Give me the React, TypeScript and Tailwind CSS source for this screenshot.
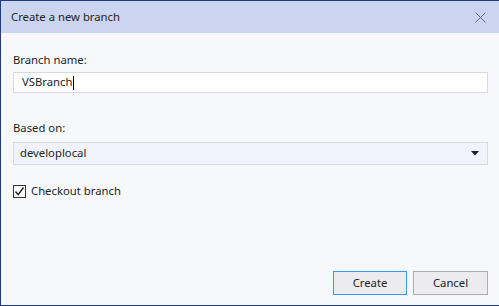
export default function App() {
  return (
    <div className="w-[499px] h-[306px] bg-[#f7f8fc] border border-r-0 border-[#1e3d7e] flex flex-col text-[11.3px] text-[#1e1e1e] font-['Noto_Sans','Open_Sans',sans-serif]">
      <div className="h-[32px] bg-[#ccd5f0] flex items-center justify-between pl-[10px] pr-[13px] shrink-0">
        <span>Create a new branch</span>
        <svg width="11" height="11" viewBox="0 0 11 11" className="text-[#5a6790]">
          <path d="M0.5 0.5 L10.5 10.5 M10.5 0.5 L0.5 10.5" stroke="currentColor" strokeWidth="1" />
        </svg>
      </div>

      <div className="flex-1 flex flex-col pl-[12px] pr-[11px] pt-[18px] pb-[10px]">
        <label className="leading-[18px]">Branch name:</label>
        <div className="mt-[3px] h-[21px] bg-white border border-[#d9d9de] flex items-center pl-[8px]">
          <span>VSBranch</span>
          <span className="w-px h-[14px] bg-black" />
        </div>

        <label className="mt-[26px] leading-[18px]">Based on:</label>
        <div className="mt-[5px] h-[23px] bg-[#f0f3fb] border border-[#d9d9de] flex items-center justify-between pl-[6px] pr-[8px]">
          <span>developlocal</span>
          <svg width="8" height="5" viewBox="0 0 8 5">
            <path d="M0 0 H8 L4 4.5 Z" fill="#1e1e1e" />
          </svg>
        </div>

        <div className="mt-[18px] flex items-center gap-[5px]">
          <span className="w-[13px] h-[13px] border border-[#333] bg-white flex items-center justify-center">
            <svg width="11" height="11" viewBox="0 0 11 11">
              <path d="M1.5 5.5 L4.2 8.7 L9.5 1.5" stroke="#1e1e1e" strokeWidth="1.4" fill="none" />
            </svg>
          </span>
          <span>Checkout branch</span>
        </div>

        <div className="mt-auto flex justify-end gap-[6px]">
          <button className="w-[74px] h-[24px] bg-[#ececf0] border border-[#3399ff]">Create</button>
          <button className="w-[75px] h-[24px] bg-[#ececf0] border border-[#adadad]">Cancel</button>
        </div>
      </div>
    </div>
  );
}
